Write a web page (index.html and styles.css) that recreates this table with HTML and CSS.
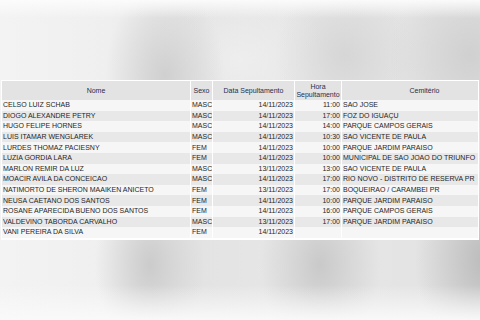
FILE: index.html
```html
<!DOCTYPE html>
<html lang="pt-BR">
<head>
<meta charset="utf-8">
<title>Sepultamentos</title>
<link rel="stylesheet" href="styles.css">
</head>
<body>
<main class="stage">
  <table class="burials">
    <colgroup>
      <col class="c-name"><col class="c-sex"><col class="c-date"><col class="c-hour"><col class="c-cem">
    </colgroup>
    <thead>
      <tr>
        <th>Nome</th>
        <th>Sexo</th>
        <th>Data Sepultamento</th>
        <th>Hora<br>Sepultamento</th>
        <th class="h-cem">Cemitério</th>
      </tr>
    </thead>
    <tbody>
      <tr><td>CELSO LUIZ SCHAB</td><td>MASC</td><td class="r">14/11/2023</td><td class="r">11:00</td><td>SAO JOSE</td></tr>
      <tr><td>DIOGO ALEXANDRE PETRY</td><td>MASC</td><td class="r">14/11/2023</td><td class="r">17:00</td><td>FOZ DO IGUAÇU</td></tr>
      <tr><td>HUGO FELIPE HORNES</td><td>MASC</td><td class="r">14/11/2023</td><td class="r">14:00</td><td>PARQUE CAMPOS GERAIS</td></tr>
      <tr><td>LUIS ITAMAR WENGLAREK</td><td>MASC</td><td class="r">14/11/2023</td><td class="r">10:30</td><td>SAO VICENTE DE PAULA</td></tr>
      <tr><td>LURDES THOMAZ PACIESNY</td><td>FEM</td><td class="r">14/11/2023</td><td class="r">10:00</td><td>PARQUE JARDIM PARAISO</td></tr>
      <tr><td>LUZIA GORDIA LARA</td><td>FEM</td><td class="r">14/11/2023</td><td class="r">10:00</td><td>MUNICIPAL DE SAO JOAO DO TRIUNFO</td></tr>
      <tr><td>MARLON REMIR DA LUZ</td><td>MASC</td><td class="r">13/11/2023</td><td class="r">13:00</td><td>SAO VICENTE DE PAULA</td></tr>
      <tr><td>MOACIR AVILA DA CONCEICAO</td><td>MASC</td><td class="r">14/11/2023</td><td class="r">17:00</td><td>RIO NOVO - DISTRITO DE RESERVA PR</td></tr>
      <tr><td>NATIMORTO DE SHERON MAAIKEN ANICETO</td><td>FEM</td><td class="r">13/11/2023</td><td class="r">17:00</td><td>BOQUEIRAO / CARAMBEI PR</td></tr>
      <tr><td>NEUSA CAETANO DOS SANTOS</td><td>FEM</td><td class="r">14/11/2023</td><td class="r">10:00</td><td>PARQUE JARDIM PARAISO</td></tr>
      <tr><td>ROSANE APARECIDA BUENO DOS SANTOS</td><td>FEM</td><td class="r">14/11/2023</td><td class="r">16:00</td><td>PARQUE CAMPOS GERAIS</td></tr>
      <tr><td>VALDEVINO TABORDA CARVALHO</td><td>MASC</td><td class="r">13/11/2023</td><td class="r">17:00</td><td>PARQUE JARDIM PARAISO</td></tr>
      <tr><td>VANI PEREIRA DA SILVA</td><td>FEM</td><td class="r">14/11/2023</td><td class="r"></td><td></td></tr>
    </tbody>
  </table>
</main>
</body>
</html>
```

FILE: styles.css
```css
html, body {
  margin: 0;
  padding: 0;
}

body {
  width: 480px;
  height: 320px;
  overflow: hidden;
  font-family: "Liberation Sans", Arial, sans-serif;
  background-color: #ebebeb;
  background-image:
    linear-gradient(to bottom, rgba(252,252,252,0.95) 0px, rgba(250,250,250,0) 18px, rgba(250,250,250,0) 285px, rgba(250,250,250,0.95) 320px),
    radial-gradient(60px 90px at 165px 75px, rgba(205,205,205,0.9), rgba(205,205,205,0)),
    radial-gradient(70px 80px at 345px 55px, rgba(210,210,210,0.8), rgba(210,210,210,0)),
    radial-gradient(80px 90px at 470px 55px, rgba(205,205,205,0.85), rgba(205,205,205,0)),
    radial-gradient(55px 90px at 150px 265px, rgba(200,200,200,0.9), rgba(200,200,200,0)),
    radial-gradient(60px 90px at 320px 265px, rgba(198,198,198,0.9), rgba(198,198,198,0)),
    radial-gradient(70px 100px at 485px 260px, rgba(185,185,185,0.95), rgba(185,185,185,0)),
    radial-gradient(90px 70px at 240px 60px, rgba(240,240,240,0.8), rgba(240,240,240,0)),
    linear-gradient(to right, #f3f3f3 0px, #efefef 110px, #e3e3e3 200px, #e7e7e7 300px, #e2e2e2 480px);
}

.stage {
  padding-top: 80px;
  padding-left: 1px;
}

.burials {
  width: 478px;
  table-layout: fixed;
  border-collapse: separate;
  border-spacing: 1px 0;
  background: #ffffff;
  padding: 1px 0 2px;
  font-size: 7px;
  color: #1f1f1f;
}

.c-name { width: 188px; }
.c-sex { width: 21px; }
.c-date { width: 81px; }
.c-hour { width: 46px; }
.c-cem { width: 136px; }

.burials th {
  height: 19px;
  padding: 0 1px;
  background: #e3e3e3;
  color: #1f2f52;
  font-weight: normal;
  line-height: 8px;
  text-align: center;
  vertical-align: middle;
}

.burials th.h-cem {
  padding-left: 30px;
}

.burials td {
  height: 10.6px;
  padding: 0 1px;
  line-height: 8px;
  white-space: nowrap;
  overflow: hidden;
  vertical-align: middle;
  text-align: left;
}

.burials td.r {
  text-align: right;
}

.burials tbody tr:nth-child(odd) td {
  background: #f6f6f6;
}

.burials tbody tr:nth-child(even) td {
  background: #e8e8e8;
}
```
